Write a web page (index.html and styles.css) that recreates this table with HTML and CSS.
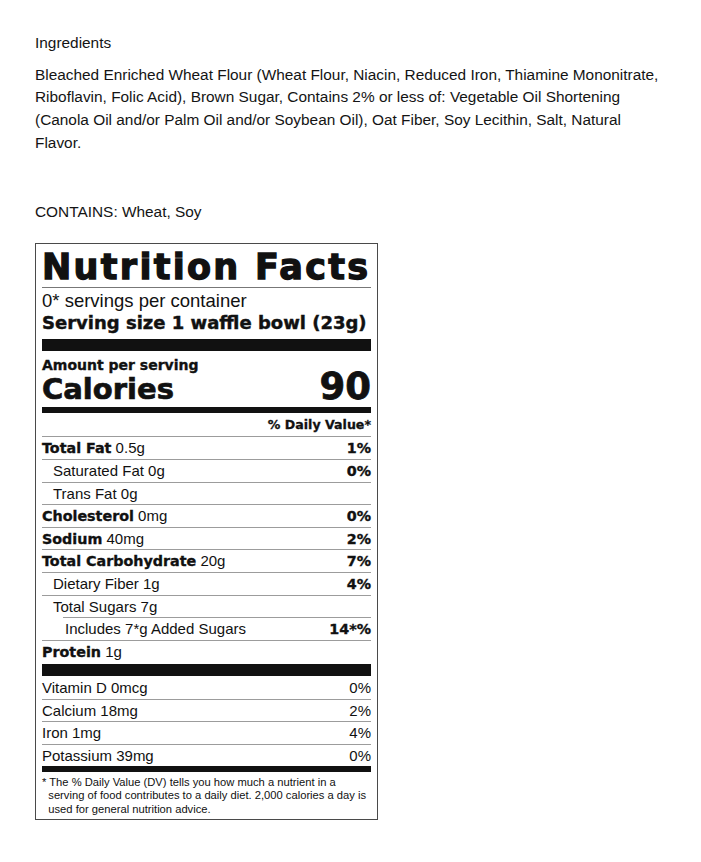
FILE: index.html
```html
<!DOCTYPE html>
<html lang="en">
<head>
<meta charset="utf-8">
<title>Ingredients and Nutrition Facts</title>
<link rel="stylesheet" href="styles.css">
</head>
<body>
<main class="page">
  <p class="ing-title">Ingredients</p>
  <p class="ing-text">Bleached Enriched Wheat Flour (Wheat Flour, Niacin, Reduced Iron, Thiamine Mononitrate,<br>Riboflavin, Folic Acid), Brown Sugar, Contains 2% or less of: Vegetable Oil Shortening<br>(Canola Oil and/or Palm Oil and/or Soybean Oil), Oat Fiber, Soy Lecithin, Salt, Natural<br>Flavor.</p>
  <p class="contains">CONTAINS: Wheat, Soy</p>

  <section class="label">
    <h1 class="nf-title">Nutrition Facts</h1>
    <div class="servings">0* servings per container</div>
    <div class="serving-size">Serving size 1 waffle bowl (23g)</div>
    <div class="bar bar-thick"></div>
    <div class="amount">Amount per serving</div>
    <div class="calories"><span class="cal-label">Calories</span><span class="cal-value">90</span></div>
    <div class="bar bar-mid"></div>
    <div class="dv-head">% Daily Value*</div>

    <div class="row"><span><b>Total Fat</b> 0.5g</span><b>1%</b></div>
    <div class="row sub1"><span>Saturated Fat 0g</span><b>0%</b></div>
    <div class="row sub1"><span>Trans Fat 0g</span></div>
    <div class="row"><span><b>Cholesterol</b> 0mg</span><b>0%</b></div>
    <div class="row"><span><b>Sodium</b> 40mg</span><b>2%</b></div>
    <div class="row"><span><b>Total Carbohydrate</b> 20g</span><b>7%</b></div>
    <div class="row sub1"><span>Dietary Fiber 1g</span><b>4%</b></div>
    <div class="row sub1"><span>Total Sugars 7g</span></div>
    <div class="row sub2"><span>Includes 7*g Added Sugars</span><b>14*%</b></div>
    <div class="row"><span><b>Protein</b> 1g</span></div>

    <div class="bar bar-protein"></div>

    <div class="row vit first"><span>Vitamin D 0mcg</span><span>0%</span></div>
    <div class="row vit"><span>Calcium 18mg</span><span>2%</span></div>
    <div class="row vit"><span>Iron 1mg</span><span>4%</span></div>
    <div class="row vit"><span>Potassium 39mg</span><span>0%</span></div>

    <div class="bar bar-end"></div>
    <p class="footnote">* The % Daily Value (DV) tells you how much a nutrient in a<br>serving of food contributes to a daily diet. 2,000 calories a day is<br>used for general nutrition advice.</p>
  </section>
</main>
</body>
</html>
```

FILE: styles.css
```css
html, body {
  margin: 0;
  padding: 0;
  background: #ffffff;
}

.page {
  padding: 31px 35px 30px 35px;
  font-family: "Liberation Sans", Arial, sans-serif;
  color: #141414;
  font-size: 15.4px;
}

.page p {
  margin: 0;
}

.ing-title {
  line-height: 23px;
}

.ing-text {
  margin-top: 9.5px !important;
  line-height: 22.8px;
  white-space: nowrap;
}

.contains {
  margin-top: 45px !important;
  line-height: 23px;
}

/* Nutrition label */
.label {
  margin-top: 20.5px;
  width: 343px;
  box-sizing: border-box;
  border: 1px solid #4a4a4a;
  padding: 0 6px;
  color: #111111;
  font-family: "Liberation Sans", Arial, sans-serif;
  font-size: 15px;
}

.label b {
  font-family: "DejaVu Sans", "Liberation Sans", sans-serif;
  font-weight: 700;
  font-size: 14.3px;
  -webkit-text-stroke: 0.35px #111111;
}

.nf-title {
  margin: 0;
  padding-top: 2.6px;
  font-family: "DejaVu Sans", "Liberation Sans", sans-serif;
  font-weight: 700;
  font-size: 35px;
  line-height: 40px;
  letter-spacing: 2.3px;
  -webkit-text-stroke: 1.3px #111111;
  white-space: nowrap;
  border-bottom: 1px solid #777777;
}

.servings {
  padding-top: 2px;
  font-size: 18.5px;
  line-height: 22px;
}

.serving-size {
  font-family: "DejaVu Sans", "Liberation Sans", sans-serif;
  font-weight: 700;
  font-size: 18px;
  line-height: 22px;
  white-space: nowrap;
  -webkit-text-stroke: 0.45px #111111;
}

.bar {
  background: #111111;
}

.bar-thick {
  margin-top: 5.4px;
  height: 12px;
}

.amount {
  padding-top: 5.8px;
  font-family: "DejaVu Sans", "Liberation Sans", sans-serif;
  font-weight: 700;
  font-size: 14px;
  line-height: 16px;
  -webkit-text-stroke: 0.35px #111111;
}

.calories {
  margin-top: 2.4px;
  display: flex;
  justify-content: space-between;
  align-items: baseline;
  font-family: "DejaVu Sans", "Liberation Sans", sans-serif;
  font-weight: 700;
}

.cal-label {
  font-size: 29px;
  line-height: 24px;
  -webkit-text-stroke: 0.7px #111111;
}

.cal-value {
  font-size: 37px;
  line-height: 24px;
  -webkit-text-stroke: 0.8px #111111;
}

.bar-mid {
  margin-top: 6px;
  height: 5.5px;
}

.dv-head {
  padding-top: 4.6px;
  padding-bottom: 2.9px;
  text-align: right;
  font-family: "DejaVu Sans", "Liberation Sans", sans-serif;
  font-weight: 700;
  font-size: 12.6px;
  line-height: 16px;
  -webkit-text-stroke: 0.3px #111111;
}

.row {
  display: flex;
  justify-content: space-between;
  align-items: baseline;
  height: 22.63px;
  box-sizing: border-box;
  border-top: 1px solid #9c9c9c;
  line-height: 21px;
  white-space: nowrap;
}

.row.sub1 {
  padding-left: 11px;
}

.row.sub2 {
  margin-left: 21px;
  padding-left: 2px;
}

.row.vit.first {
  border-top-color: transparent;
}

.bar-protein {
  margin-top: 1.4px;
  height: 12px;
}

.bar-end {
  height: 5.5px;
}

.label .footnote {
  margin: 0;
  padding: 3.6px 0 3px 6.3px;
  text-indent: -6.3px;
  font-size: 11.2px;
  line-height: 13.5px;
  white-space: nowrap;
}
```
